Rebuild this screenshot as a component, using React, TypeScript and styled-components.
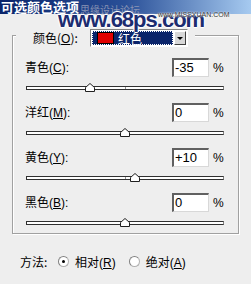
import styled, {createGlobalStyle} from 'styled-components'

const GlobalStyle = createGlobalStyle`
	html, body {
		margin: 0;
		padding: 0;
		background: #eeeeee;
	}
	body {
		font-family: "Noto Sans CJK SC", "Liberation Sans", sans-serif;
		font-size: 12px;
		color: #000;
	}
`

const Dialog = styled.div`
	position: relative;
	width: 251px;
	height: 284px;
	background: #eeeeee;
	overflow: hidden;
`

const TitleBar = styled.div`
	height: 14px;
	background: linear-gradient(to right, #0a246a 0%, #2a5098 50%, #a6caf0 100%);
	color: #fff;
	font-weight: bold;
	font-size: 13px;
	line-height: 14px;
	padding-left: 1px;
`

const Watermark = styled.div`
	position: absolute;
	left: 0;
	top: 0;
	width: 251px;
	height: 40px;
	pointer-events: none;
`

const MarkCn = styled.span`
	position: absolute;
	left: 80px;
	top: 4px;
	font-size: 10px;
	line-height: 12px;
	color: #8a94b4;
`

const MarkBig = styled.span`
	position: absolute;
	left: 58px;
	top: 9px;
	font-family: "Liberation Sans", Arial, sans-serif;
	font-weight: bold;
	font-size: 22px;
	line-height: 22px;
	letter-spacing: -1px;
	color: #1c2c70;
	text-shadow: 1px 0 0 #fff, -1px 0 0 #fff, 0 1px 0 #fff, 0 -1px 0 #fff, 0 0 3px #fff;
`

const MarkSmall = styled.span`
	position: absolute;
	left: 158px;
	top: 11px;
	font-family: "Liberation Sans", Arial, sans-serif;
	font-size: 7px;
	line-height: 8px;
	color: #333;
	text-shadow: 0 0 2px #fff, 0 0 1px #fff;
`

const Group = styled.div`
	box-sizing: border-box;
	margin: 21px 0 0 12px;
	width: 227px;
	border: 1px solid #a0a0a0;
	box-shadow: inset 1px 1px 0 #fff, 1px 1px 0 #fff;
	padding: 0 12px 6px 12px;
`

const Legend = styled.div`
	display: flex;
	align-items: center;
	width: fit-content;
	margin: -7px 0 0 -9px;
	padding: 0 7px 0 17px;
	background: #eeeeee;
	height: 18px;
`

const LegendLabel = styled.span`
	width: 57px;
	line-height: 18px;
`

const Dropdown = styled.div`
	display: flex;
	width: 98px;
	height: 18px;
	box-sizing: border-box;
	border-top: 1px solid #808080;
	border-left: 1px solid #808080;
	border-right: 1px solid #fff;
	border-bottom: 1px solid #fff;
	background: #fff;
`

const DropValue = styled.div`
	flex: 1;
	display: flex;
	align-items: center;
	background: #0a246a;
	margin: 1px;
	outline: 1px dotted #fff;
	outline-offset: -1px;
	color: #fff;
	padding-left: 5px;
	gap: 4px;
`

const Swatch = styled.span`
	width: 15px;
	height: 10px;
	background: #e00000;
	border: 1px solid #000;
`

const DropButton = styled.div`
	width: 12px;
	margin: 1px 1px 1px 0;
	background: #d8d8d8;
	border-top: 1px solid #fff;
	border-left: 1px solid #fff;
	border-right: 1px solid #404040;
	border-bottom: 1px solid #404040;
	box-sizing: border-box;
	display: flex;
	align-items: center;
	justify-content: center;
	&::after {
		content: '';
		border-left: 3px solid transparent;
		border-right: 3px solid transparent;
		border-top: 3px solid #000;
	}
`

const Row = styled.div`
	display: flex;
	align-items: center;
	height: 19px;
	margin-top: 11px;
`

const Label = styled.span`
	flex: 1;
	line-height: 19px;
`

const Key = styled.span`
	text-decoration: underline;
	font-family: "Liberation Sans", Arial, sans-serif;
`

const ValueBox = styled.div`
	width: 37px;
	height: 19px;
	box-sizing: border-box;
	background: #fff;
	border-top: 2px solid #606060;
	border-left: 2px solid #606060;
	border-right: 1px solid #d8d8d8;
	border-bottom: 1px solid #d8d8d8;
	font-family: "Liberation Sans", Arial, sans-serif;
	font-size: 13px;
	line-height: 16px;
	padding-left: 1px;
`

const Percent = styled.span`
	width: 13px;
	margin-left: 4px;
	font-family: "Liberation Sans", Arial, sans-serif;
	font-size: 12px;
`

const Slider = styled.div`
	position: relative;
	height: 9px;
	margin: 6px 0 0 1px;
	width: 198px;
`

const Track = styled.div`
	position: absolute;
	left: 0;
	right: 0;
	top: 3px;
	height: 4px;
	box-sizing: border-box;
	background: #fff;
	border: 1px solid #303030;
	border-right-color: #808080;
	&::after {
		content: '';
		position: absolute;
		left: 98px;
		top: 0;
		width: 1px;
		height: 2px;
		background: #909090;
	}
`

const Thumb = styled.svg`
	position: absolute;
	top: 0;
	width: 10px;
	height: 9px;
	margin-left: -5px;
`

const Method = styled.div`
	display: flex;
	align-items: center;
	height: 20px;
	margin: 17px 0 0 20px;
`

const MethodLabel = styled.span`
	width: 38px;
`

const Radio = styled.span<{$on?: boolean}>`
	width: 11px;
	height: 11px;
	box-sizing: border-box;
	border-radius: 50%;
	border: 1px solid #b0b0b0;
	border-top-color: #808080;
	border-left-color: #808080;
	background: #fff;
	display: flex;
	align-items: center;
	justify-content: center;
	margin-right: 6px;
	&::after {
		content: '';
		width: 3px;
		height: 3px;
		border-radius: 50%;
		background: ${p => p.$on ? '#000' : 'transparent'};
	}
`

const RadioText = styled.span`
	margin-right: 13px;
`

const Paren = styled.span`
	font-family: "Liberation Sans", Arial, sans-serif;
`

interface IChannel {
	name: string;
	key: string;
	value: number;
}

const channels: IChannel[] = [
	{name: '青色', key: 'C', value: -35},
	{name: '洋红', key: 'M', value: 0},
	{name: '黄色', key: 'Y', value: 10},
	{name: '黑色', key: 'B', value: 0},
]

const formatValue = (v: number): string => v > 0 ? `+${v}` : `${v}`

export default function App(): JSX.Element {
	return (
		<Dialog>
			<GlobalStyle/>
			<TitleBar>可选颜色选项</TitleBar>
			<Group>
				<Legend>
					<LegendLabel>颜色(<Key>O</Key>):</LegendLabel>
					<Dropdown>
						<DropValue><Swatch/>红色</DropValue>
						<DropButton/>
					</Dropdown>
				</Legend>
				{channels.map(ch => (
					<div key={ch.key}>
						<Row>
							<Label>{ch.name}<Paren>(<Key>{ch.key}</Key>):</Paren></Label>
							<ValueBox>{formatValue(ch.value)}</ValueBox>
							<Percent>%</Percent>
						</Row>
						<Slider>
							<Track/>
							<Thumb viewBox="0 0 10 9" style={{left: `${(ch.value + 100) / 200 * 198}px`}}>
								<path d="M0.5 8.5 V4.5 L5 0.5 L9.5 4.5 V8.5 Z" fill="#fff" stroke="#202020" strokeWidth="1"/>
							</Thumb>
						</Slider>
					</div>
				))}
			</Group>
			<Method>
				<MethodLabel>方法:</MethodLabel>
				<Radio $on/>
				<RadioText>相对<Paren>(<Key>R</Key>)</Paren></RadioText>
				<Radio/>
				<RadioText>绝对<Paren>(<Key>A</Key>)</Paren></RadioText>
			</Method>
			<Watermark>
				<MarkCn>思缘设计论坛</MarkCn>
				<MarkBig>www.68ps.com</MarkBig>
				<MarkSmall>www.MISSYUAN.COM</MarkSmall>
			</Watermark>
		</Dialog>
	)
}
